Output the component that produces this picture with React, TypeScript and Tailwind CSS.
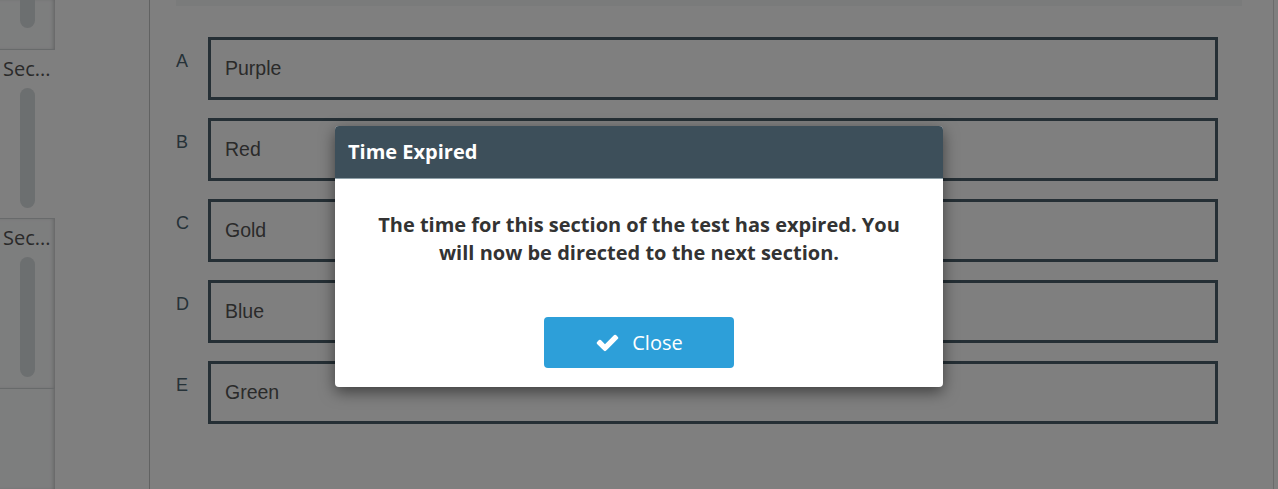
import React from "react";

const options = [
  { key: "A", text: "Purple" },
  { key: "B", text: "Red" },
  { key: "C", text: "Gold" },
  { key: "D", text: "Blue" },
  { key: "E", text: "Green" },
];

function CheckIcon() {
  return (
    <svg viewBox="0 0 1792 1792" className="w-[25px] h-[25px]" fill="currentColor">
      <path d="M1671 566q0 40-28 68l-724 724-136 136q-28 28-68 28t-68-28l-136-136-362-362q-28-28-28-68t28-68l136-136q28-28 68-28t68 28l294 295 656-657q28-28 68-28t68 28l136 136q28 28 28 68z" />
    </svg>
  );
}

function SectionItem({ label, shaded, top, h }: { label?: string; shaded?: boolean; top?: boolean; h: string }) {
  return (
    <div
      className={
        "flex flex-col items-center " +
        h +
        (shaded ? " bg-[#fbfcfd] shadow-[inset_-3px_0_4px_-2px_rgba(0,0,0,0.25)]" : " bg-white") +
        (top ? " border-b border-[#d0d4d6]" : "")
      }
    >
      {label && (
        <div className="w-full pl-[3px] pt-[7px] h-[38px] text-[20px] leading-[24px] text-[#555] whitespace-nowrap overflow-hidden font-['Open_Sans',sans-serif]">
          {label}
        </div>
      )}
      <div
        className={
          "w-[15px] rounded-full bg-[#d9dee0] " + (top ? "h-[38px] -mt-[10px]" : "h-[120px]")
        }
      />
    </div>
  );
}

export default function App() {
  return (
    <div className="relative h-[489px] w-[1278px] overflow-hidden bg-white">
      <div className="flex h-full">
        {/* sidebar */}
        <aside className="w-[150px] h-full border-r border-[#c2c4c4] flex">
          <div className="w-[55px] h-full flex flex-col bg-[#fbfcfd] shadow-[inset_-3px_0_4px_-2px_rgba(0,0,0,0.25)]">
            <SectionItem shaded top h="h-[50px]" />
            <SectionItem label="Sec..." h="h-[168px]" />
            <div className="border-t border-b border-[#d0d4d6]">
              <SectionItem label="Sec..." shaded h="h-[169px]" />
            </div>
          </div>
        </aside>

        {/* main */}
        <main className="flex-1 h-full pl-[26px] pr-[5px] border-r border-[#d6d6d6] mr-[4px]">
          <div className="h-[6px] w-[1066px] bg-[#f4f6f6]" />
          <div className="mt-[31px] flex flex-col gap-[18px]">
            {options.map((o) => (
              <div key={o.key} className="flex">
                <div className="w-[32px] pt-[13px] text-[18px] leading-[22px] text-[#4c6470] font-['Liberation_Sans',Arial,sans-serif]">
                  {o.key}
                </div>
                <div className="w-[1010px] h-[63px] border-[3px] border-[#4a5f6b] flex items-center pl-[14px] text-[19.5px] text-[#555] font-['Liberation_Sans',Arial,sans-serif]">
                  {o.text}
                </div>
              </div>
            ))}
          </div>
        </main>
      </div>

      {/* overlay */}
      <div className="absolute inset-0 bg-black/50" />

      {/* modal */}
      <div className="absolute left-[335px] top-[126px] w-[608px] rounded-[4px] overflow-hidden bg-white shadow-[0_5px_15px_rgba(0,0,0,0.5)] font-['Open_Sans',sans-serif]">
        <div className="h-[53px] bg-[#3d4f5a] border-b border-[#8fa0a8] flex items-center px-[13px]">
          <span className="text-white font-bold text-[20px]">Time Expired</span>
        </div>
        <div className="px-[40px] pt-[32px] text-center text-[20px] leading-[28px] font-bold text-[#333]">
          The time for this section of the test has expired. You will now be directed to the next section.
        </div>
        <div className="flex justify-center pt-[50px] pb-[19px]">
          <button className="w-[190px] h-[51px] rounded-[4px] bg-[#2d9fd9] text-white flex items-center justify-center gap-[12px] text-[20px]">
            <CheckIcon />
            <span>Close</span>
          </button>
        </div>
      </div>
    </div>
  );
}
